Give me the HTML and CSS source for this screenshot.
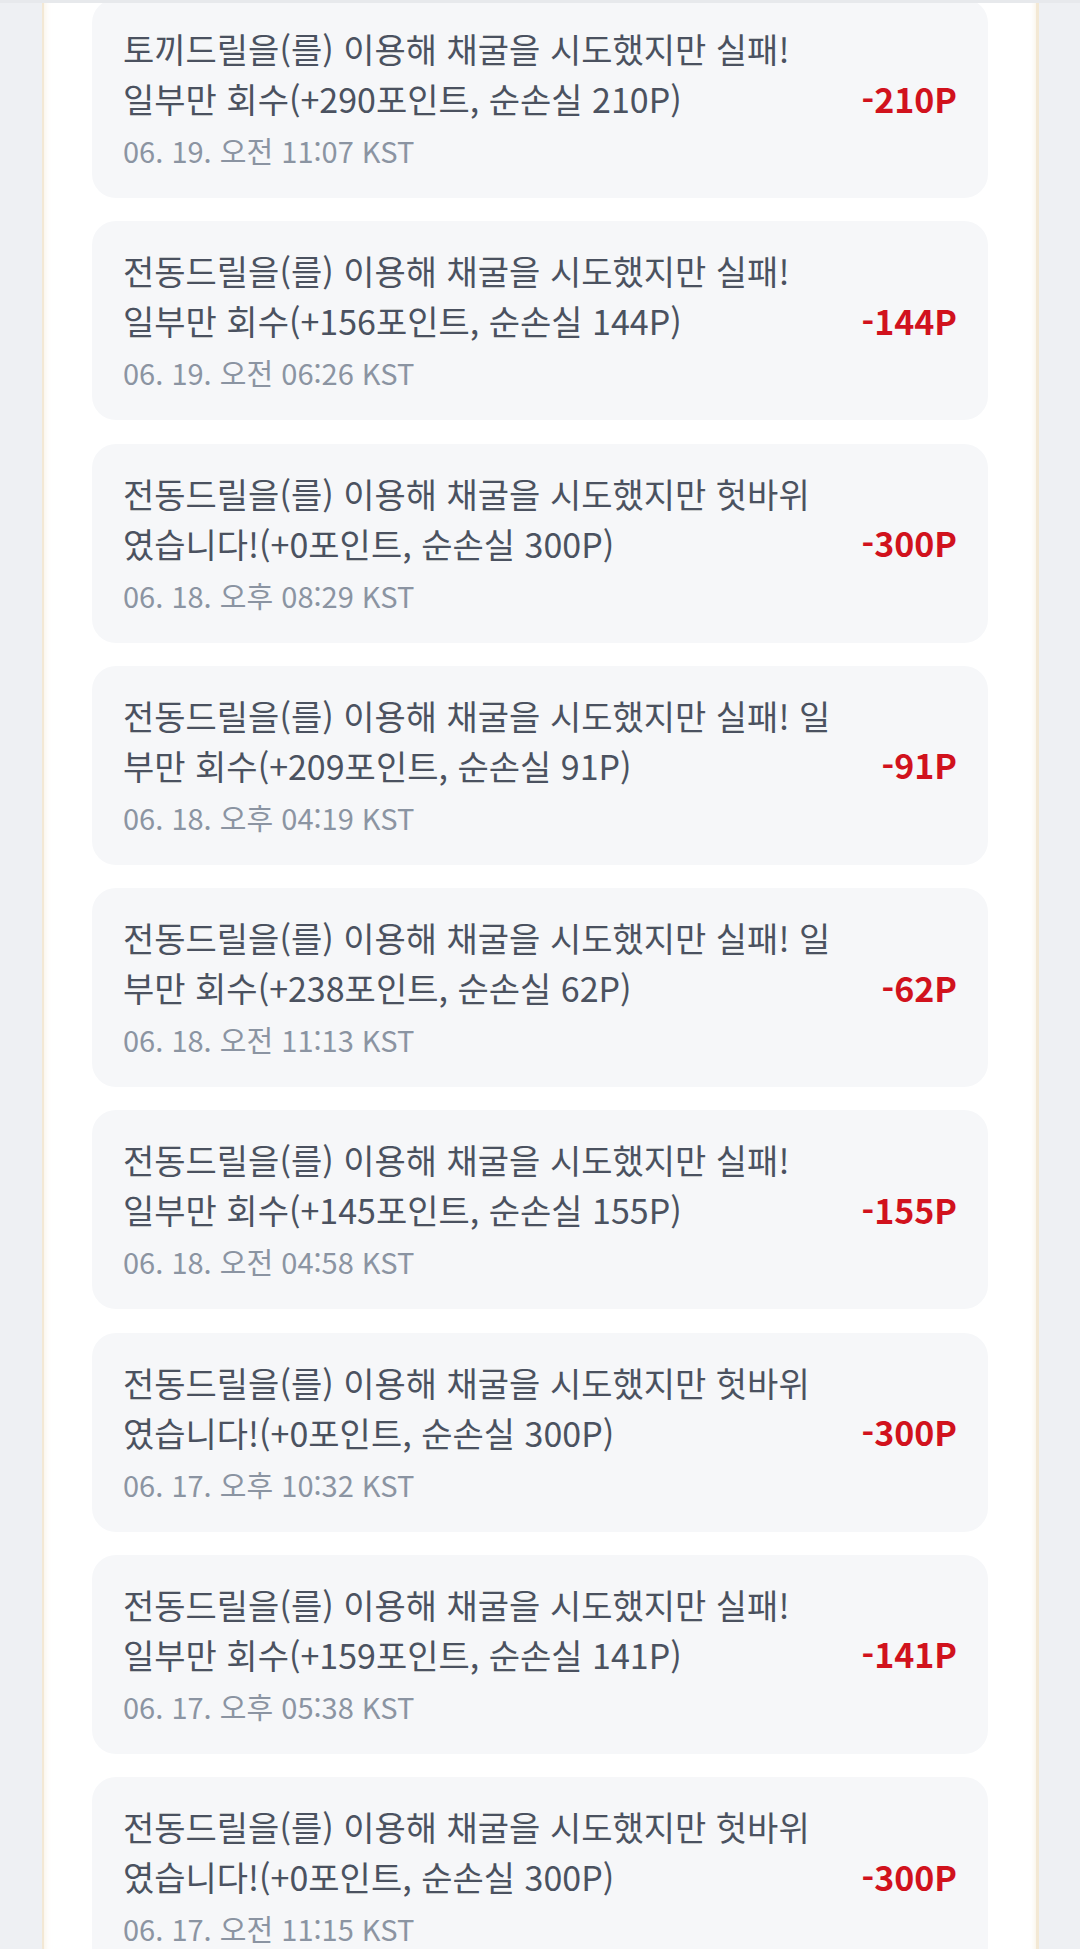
FILE: index.html
```html
<!DOCTYPE html>
<html lang="ko">
<head>
<meta charset="utf-8">
<title>채굴 내역</title>
<link rel="stylesheet" href="styles.css">
</head>
<body>
<div class="topbar"></div>
<main class="page">
  <ul class="list">
    <li class="card">
      <div class="body">
        <p class="msg">토끼드릴을(를) 이용해 채굴을 시도했지만 실패! 일부만 회수(+290포인트, 순손실 210P)</p>
        <p class="date">06. 19. 오전 11:07 KST</p>
      </div>
      <span class="amount">-210P</span>
    </li>
    <li class="card">
      <div class="body">
        <p class="msg">전동드릴을(를) 이용해 채굴을 시도했지만 실패! 일부만 회수(+156포인트, 순손실 144P)</p>
        <p class="date">06. 19. 오전 06:26 KST</p>
      </div>
      <span class="amount">-144P</span>
    </li>
    <li class="card">
      <div class="body">
        <p class="msg">전동드릴을(를) 이용해 채굴을 시도했지만 헛바위였습니다!(+0포인트, 순손실 300P)</p>
        <p class="date">06. 18. 오후 08:29 KST</p>
      </div>
      <span class="amount">-300P</span>
    </li>
    <li class="card">
      <div class="body">
        <p class="msg">전동드릴을(를) 이용해 채굴을 시도했지만 실패! 일부만 회수(+209포인트, 순손실 91P)</p>
        <p class="date">06. 18. 오후 04:19 KST</p>
      </div>
      <span class="amount">-91P</span>
    </li>
    <li class="card">
      <div class="body">
        <p class="msg">전동드릴을(를) 이용해 채굴을 시도했지만 실패! 일부만 회수(+238포인트, 순손실 62P)</p>
        <p class="date">06. 18. 오전 11:13 KST</p>
      </div>
      <span class="amount">-62P</span>
    </li>
    <li class="card">
      <div class="body">
        <p class="msg">전동드릴을(를) 이용해 채굴을 시도했지만 실패! 일부만 회수(+145포인트, 순손실 155P)</p>
        <p class="date">06. 18. 오전 04:58 KST</p>
      </div>
      <span class="amount">-155P</span>
    </li>
    <li class="card">
      <div class="body">
        <p class="msg">전동드릴을(를) 이용해 채굴을 시도했지만 헛바위였습니다!(+0포인트, 순손실 300P)</p>
        <p class="date">06. 17. 오후 10:32 KST</p>
      </div>
      <span class="amount">-300P</span>
    </li>
    <li class="card">
      <div class="body">
        <p class="msg">전동드릴을(를) 이용해 채굴을 시도했지만 실패! 일부만 회수(+159포인트, 순손실 141P)</p>
        <p class="date">06. 17. 오후 05:38 KST</p>
      </div>
      <span class="amount">-141P</span>
    </li>
    <li class="card">
      <div class="body">
        <p class="msg">전동드릴을(를) 이용해 채굴을 시도했지만 헛바위였습니다!(+0포인트, 순손실 300P)</p>
        <p class="date">06. 17. 오전 11:15 KST</p>
      </div>
      <span class="amount">-300P</span>
    </li>
  </ul>
</main>
</body>
</html>
```

FILE: styles.css
```css
html, body {
  margin: 0;
  padding: 0;
}

body {
  background: #eef0f3;
  font-family: "Noto Sans CJK KR", "Noto Sans", sans-serif;
  min-height: 1949px;
  overflow: hidden;
}

.topbar {
  position: fixed;
  top: 0;
  left: 0;
  right: 0;
  height: 3px;
  background: #e7e9ec;
  z-index: 5;
}

.page {
  width: 992px;
  margin-left: 42px;
  min-height: 1949px;
  background: #ffffff;
  border-left: 2px solid #f3e8d4;
  border-right: 3px solid #f3e8d4;
  box-shadow: inset 6px 0 6px -5px rgba(244, 232, 208, 0.6),
              inset -5px 0 5px -4px rgba(244, 232, 208, 0.6);
}

.list {
  list-style: none;
  margin: -1px 0 0;
  padding: 0 48px;
  display: flex;
  flex-direction: column;
  gap: 23.25px;
}

.card {
  display: flex;
  align-items: center;
  gap: 40px;
  height: 199px;
  box-sizing: border-box;
  padding: 25px 31px 25px 31px;
  background: #f6f7f9;
  border-radius: 24px;
}

.body {
  flex: 1;
  min-width: 0;
}

.msg {
  margin: 0;
  font-size: 34px;
  line-height: 50px;
  color: #4b5260;
}

.date {
  margin: 3px 0 0;
  font-size: 29px;
  line-height: 46px;
  color: #8b94a2;
}

.amount {
  flex: none;
  font-size: 34px;
  font-weight: 700;
  color: #d1121d;
  line-height: 50px;
}
```
